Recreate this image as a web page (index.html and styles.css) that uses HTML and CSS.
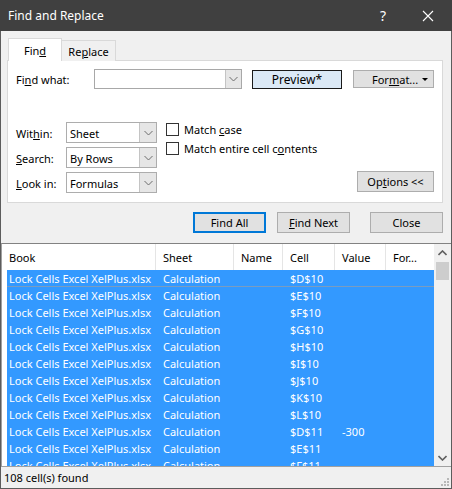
FILE: index.html
```html
<!DOCTYPE html>
<html>
<head>
<meta charset="utf-8">
<link rel="stylesheet" href="styles.css">
</head>
<body>
<div class="window">
  <div class="titlebar">
    <span class="title">Find and Replace</span>
    <span class="help">?</span>
    <svg class="close-x" width="12" height="12" viewBox="0 0 12 12"><path d="M1 1 L11 11 M11 1 L1 11" stroke="#fff" stroke-width="1.1" fill="none"/></svg>
  </div>
  <div class="upper">
    <div class="tabs">
      <div class="tab active">Fin<u>d</u></div>
      <div class="tab">Re<u>p</u>lace</div>
    </div>
    <div class="panel">
      <div class="row-find">
        <span class="lbl-find">Fi<u>n</u>d what:</span>
        <div class="combo">
          <div class="combo-input"></div>
          <div class="drop"><svg width="9" height="6" viewBox="0 0 9 6"><path d="M0.5 1 L4.5 5 L8.5 1" stroke="#6d6d6d" fill="none" stroke-width="1"/></svg></div>
        </div>
        <button class="btn preview">Preview*</button>
        <button class="btn format"><span class="ftext">For<u>m</u>at...</span><span class="caret"></span></button>
      </div>
      <div class="options">
        <span class="lbl r1">Wit<u>h</u>in:</span>
        <div class="select r1"><span class="sval">Sheet</span><div class="drop"><svg width="9" height="6" viewBox="0 0 9 6"><path d="M0.5 1 L4.5 5 L8.5 1" stroke="#6d6d6d" fill="none" stroke-width="1"/></svg></div></div>
        <span class="lbl r2"><u>S</u>earch:</span>
        <div class="select r2"><span class="sval">By Rows</span><div class="drop"><svg width="9" height="6" viewBox="0 0 9 6"><path d="M0.5 1 L4.5 5 L8.5 1" stroke="#6d6d6d" fill="none" stroke-width="1"/></svg></div></div>
        <span class="lbl r3"><u>L</u>ook in:</span>
        <div class="select r3"><span class="sval">Formulas</span><div class="drop"><svg width="9" height="6" viewBox="0 0 9 6"><path d="M0.5 1 L4.5 5 L8.5 1" stroke="#6d6d6d" fill="none" stroke-width="1"/></svg></div></div>
        <div class="checks">
          <div class="check"><span class="box"></span><span>Match <u>c</u>ase</span></div>
          <div class="check"><span class="box"></span><span>Match entire cell c<u>o</u>ntents</span></div>
        </div>
        <button class="btn opts">Op<u>t</u>ions &lt;&lt;</button>
      </div>
    </div>
    <div class="actions">
      <button class="btn act default">Find All</button>
      <button class="btn act"><u>F</u>ind Next</button>
      <button class="btn act close">Close</button>
    </div>
  </div>
  <div class="list">
    <div class="table">
      <div class="thead">
        <span class="th">Book</span>
        <span class="th">Sheet</span>
        <span class="th">Name</span>
        <span class="th">Cell</span>
        <span class="th">Value</span>
        <span class="th last">For...</span>
      </div>
      <div class="rows">
        <div class="tr focus"><span>Lock Cells Excel XelPlus.xlsx</span><span>Calculation</span><span></span><span>$D$10</span><span></span><span></span></div>
        <div class="tr"><span>Lock Cells Excel XelPlus.xlsx</span><span>Calculation</span><span></span><span>$E$10</span><span></span><span></span></div>
        <div class="tr"><span>Lock Cells Excel XelPlus.xlsx</span><span>Calculation</span><span></span><span>$F$10</span><span></span><span></span></div>
        <div class="tr"><span>Lock Cells Excel XelPlus.xlsx</span><span>Calculation</span><span></span><span>$G$10</span><span></span><span></span></div>
        <div class="tr"><span>Lock Cells Excel XelPlus.xlsx</span><span>Calculation</span><span></span><span>$H$10</span><span></span><span></span></div>
        <div class="tr"><span>Lock Cells Excel XelPlus.xlsx</span><span>Calculation</span><span></span><span>$I$10</span><span></span><span></span></div>
        <div class="tr"><span>Lock Cells Excel XelPlus.xlsx</span><span>Calculation</span><span></span><span>$J$10</span><span></span><span></span></div>
        <div class="tr"><span>Lock Cells Excel XelPlus.xlsx</span><span>Calculation</span><span></span><span>$K$10</span><span></span><span></span></div>
        <div class="tr"><span>Lock Cells Excel XelPlus.xlsx</span><span>Calculation</span><span></span><span>$L$10</span><span></span><span></span></div>
        <div class="tr"><span>Lock Cells Excel XelPlus.xlsx</span><span>Calculation</span><span></span><span>$D$11</span><span>-300</span><span></span></div>
        <div class="tr"><span>Lock Cells Excel XelPlus.xlsx</span><span>Calculation</span><span></span><span>$E$11</span><span></span><span></span></div>
        <div class="tr"><span>Lock Cells Excel XelPlus.xlsx</span><span>Calculation</span><span></span><span>$F$11</span><span></span><span></span></div>
      </div>
    </div>
    <div class="scrollbar">
      <div class="sb-btn"><svg width="9" height="6" viewBox="0 0 9 6"><path d="M0.5 5 L4.5 1 L8.5 5" stroke="#606060" fill="none" stroke-width="1.6"/></svg></div>
      <div class="sb-track"><div class="sb-thumb"></div></div>
      <div class="sb-btn"><svg width="9" height="6" viewBox="0 0 9 6"><path d="M0.5 1 L4.5 5 L8.5 1" stroke="#606060" fill="none" stroke-width="1.6"/></svg></div>
    </div>
  </div>
  <div class="status">
    <span>108 cell(s) found</span>
    <svg class="grip" width="10" height="10" viewBox="0 0 10 10">
      <rect x="8" y="2" width="2" height="2" fill="#b8b8b8"/>
      <rect x="5" y="5" width="2" height="2" fill="#b8b8b8"/>
      <rect x="8" y="5" width="2" height="2" fill="#b8b8b8"/>
      <rect x="2" y="8" width="2" height="2" fill="#b8b8b8"/>
      <rect x="5" y="8" width="2" height="2" fill="#b8b8b8"/>
      <rect x="8" y="8" width="2" height="2" fill="#b8b8b8"/>
    </svg>
  </div>
</div>
</body>
</html>
```

FILE: styles.css
```css
* { box-sizing: border-box; }
html, body { margin: 0; padding: 0; }
body {
  width: 452px;
  height: 489px;
  overflow: hidden;
  background: #f0f0f0;
  font-family: "Noto Sans", "Open Sans", sans-serif;
  font-size: 11px;
  color: #000;
}
u { text-decoration: underline; text-underline-offset: 1px; }

.window {
  width: 452px;
  height: 489px;
  border: 1px solid #5c5c5c;
  border-top: none;
  display: flex;
  flex-direction: column;
  background: #f0f0f0;
}

.titlebar {
  height: 31px;
  flex: none;
  background: #404040;
  color: #fff;
  display: flex;
  align-items: center;
  padding-left: 8px;
  margin: 0 -1px;
}
.title { font-size: 12px; flex: 1; }
.help { font-size: 14px; margin-right: 36px; }
.close-x { margin-right: 18px; }

.upper {
  flex: none;
  height: 212px;
  padding: 0 8px 0 6px;
}
.tabs {
  display: flex;
  align-items: flex-end;
  margin-top: 7px;
  margin-left: 1px;
  height: 23px;
  margin-bottom: -1px;
  position: relative;
  z-index: 1;
}
.tab {
  height: 21px;
  width: 54px;
  border: 1px solid #d9d9d9;
  border-bottom: none;
  display: flex;
  align-items: center;
  justify-content: center;
  background: #f0f0f0;
  padding-top: 1px;
}
.tab.active {
  height: 23px;
  background: #fff;
  padding-top: 0;
}
.tab + .tab { border-left: none; }

.panel {
  background: #fff;
  border: 1px solid #d9d9d9;
  padding: 8px 8px 8px 8px;
  height: 143px;
}
.row-find {
  display: flex;
  align-items: center;
  height: 20px;
}
.lbl-find { width: 78px; }
.combo {
  width: 148px;
  height: 20px;
  border: 1px solid #a8a8a8;
  display: flex;
  margin-right: 10px;
}
.combo-input { flex: 1; }
.drop {
  width: 16px;
  background: #e6e6e6;
  border-left: 1px solid #c4c4c4;
  display: flex;
  align-items: center;
  justify-content: center;
}
.btn {
  font-family: inherit;
  font-size: 11px;
  color: #000;
  background: #e1e1e1;
  border: 1px solid #adadad;
  padding: 0;
  margin: 0;
  display: flex;
  align-items: center;
  justify-content: center;
}
.preview {
  width: 90px;
  height: 19px;
  background: #dbe9f6;
  border: 1px solid #1a1a1a;
  font-size: 12px;
  margin-right: 11px;
}
.format {
  width: 81px;
  height: 18px;
  justify-content: flex-start;
  padding-left: 18px;
  position: relative;
}
.caret {
  position: absolute;
  right: 5px;
  top: 7px;
  width: 0; height: 0;
  border-left: 3px solid transparent;
  border-right: 3px solid transparent;
  border-top: 3px solid #000;
}

.options {
  margin-top: 33px;
  display: grid;
  grid-template-columns: 50px 91px 1fr auto;
  grid-template-rows: 21px 21px 21px;
  row-gap: 4px;
}
.lbl { display: flex; align-items: center; padding-top: 2px; }
.lbl.r1, .select.r1 { grid-row: 1; }
.lbl.r2, .select.r2 { grid-row: 2; }
.lbl.r3, .select.r3 { grid-row: 3; }
.lbl { grid-column: 1; }
.select {
  grid-column: 2;
  border: 1px solid #adadad;
  display: flex;
}
.sval { flex: 1; padding-left: 3px; display: flex; align-items: center; padding-top: 1px; }
.select .drop { width: 17px; }
.checks {
  grid-column: 3;
  grid-row: 1 / 3;
  margin-left: 9px;
  padding-top: 1px;
  display: flex;
  flex-direction: column;
  gap: 6px;
}
.check {
  display: flex;
  align-items: center;
  height: 13px;
  gap: 5px;
}
.box {
  width: 13px;
  height: 13px;
  border: 1px solid #333;
  background: #fff;
  flex: none;
}
.opts {
  grid-column: 4;
  grid-row: 3;
  width: 77px;
  height: 21px;
  align-self: start;
  margin-top: -1px;
}

.actions {
  display: flex;
  justify-content: flex-end;
  margin-top: 9px;
}
.act { width: 73px; height: 21px; }
.act + .act { margin-left: 11px; }
.act.close { margin-left: 20px; }
.default { border: 2px solid #0078d7; }

.list {
  flex: none;
  height: 224px;
  border-top: 1px solid #828282;
  border-left: 1px solid #a0a0a0;
  border-bottom: 1px solid #a0a0a0;
  background: #fff;
  display: flex;
  overflow: hidden;
}
.table { flex: 1; overflow: hidden; }
.thead {
  height: 26px;
  display: grid;
  grid-template-columns: 154px 78px 49px 52px 51px 1fr;
}
.th {
  display: flex;
  align-items: center;
  padding-left: 7px;
  border-right: 1px solid #e5e5e5;
}
.th.last { border-right: none; }
.rows { margin-left: 5px; }
.tr {
  height: 17px;
  background: #3399ff;
  color: #fff;
  display: grid;
  grid-template-columns: 149px 78px 49px 52px 51px 1fr;
  align-items: center;
  white-space: nowrap;
}
.tr span { padding-left: 7px; overflow: hidden; }
.tr span:first-child { padding-left: 2px; }
.tr.focus { box-shadow: inset 0 -1px 0 #7a9cc0; }

.scrollbar {
  width: 17px;
  flex: none;
  background: #f0f0f0;
  display: flex;
  flex-direction: column;
}
.sb-btn {
  height: 17px;
  display: flex;
  align-items: center;
  justify-content: center;
}
.sb-track { flex: 1; padding: 1px 2px; }
.sb-thumb { height: 18px; background: #cdcdcd; }

.status {
  flex: 1;
  display: flex;
  align-items: center;
  justify-content: space-between;
  padding: 0 2px 0 3px;
}
.grip { align-self: flex-end; margin-bottom: 2px; }
```
